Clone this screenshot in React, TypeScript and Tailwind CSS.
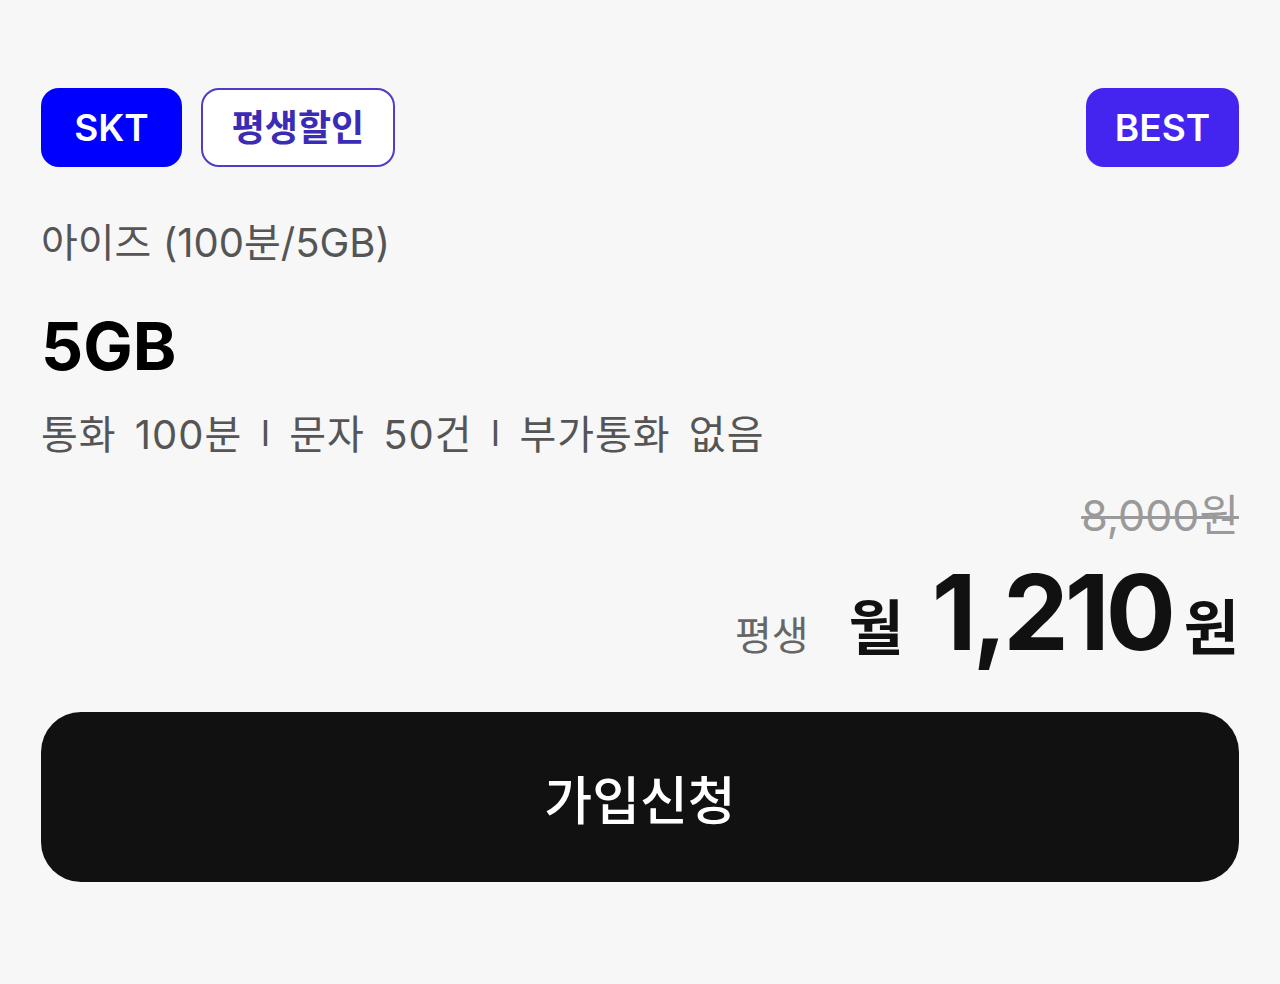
export default function App() {
  return (
    <div
      className="min-h-screen bg-[#f7f7f7] px-[41px] pt-[88px]"
      style={{ fontFamily: 'Inter, "Noto Sans CJK KR", "Noto Sans", sans-serif' }}
    >
      {/* Badges */}
      <div className="flex items-center justify-between">
        <div className="flex items-center gap-[19px]">
          <span className="flex h-[79px] w-[141px] items-center justify-center rounded-[18px] bg-[#0000fe] text-[37px] font-semibold text-white">
            SKT
          </span>
          <span className="flex h-[79px] w-[194px] items-center justify-center rounded-[18px] border-2 border-[#4c3fc6] bg-white text-[36px] font-bold text-[#3a2cb6]">
            평생할인
          </span>
        </div>
        <span className="flex h-[79px] w-[153px] items-center justify-center rounded-[18px] bg-[#4425f0] text-[37px] font-semibold text-white">
          BEST
        </span>
      </div>

      {/* Plan info */}
      <p className="mt-[48px] text-[40px] leading-[56px] text-[#555555]">
        아이즈 (100분/5GB)
      </p>
      <p className="mt-[35px] text-[66px] font-bold leading-[80px] text-black">
        5GB
      </p>
      <p className="mt-[21px] text-[40px] leading-[56px] tracking-[1px] text-[#555555] [word-spacing:6px]">
        통화 100분 <span className="relative -top-[3px] text-[35px] font-normal">I</span> 문자 50건{" "}
        <span className="relative -top-[3px] text-[35px] font-normal">I</span> 부가통화 없음
      </p>

      {/* Price */}
      <div className="mt-[26px] flex flex-col items-end">
        <span className="text-[43px] leading-[50px] text-[#9a9a9a] line-through decoration-[3px]">
          8,000원
        </span>
        <div className="mt-[12px] flex items-baseline">
          <span className="mr-[40px] text-[40px] text-[#666666]">평생</span>
          <span className="mr-[28px] text-[60px] font-bold text-[#111111]">월</span>
          <span className="text-[104px] font-bold leading-[120px] tracking-[-4px] text-[#111111]">
            1,210
          </span>
          <span className="ml-[12px] text-[60px] font-bold text-[#111111]">원</span>
        </div>
      </div>

      {/* CTA */}
      <button className="mt-[39px] flex h-[170px] w-full items-center justify-center rounded-[40px] bg-[#111111] pt-[10px] text-[52px] font-medium text-white">
        가입신청
      </button>
    </div>
  );
}
